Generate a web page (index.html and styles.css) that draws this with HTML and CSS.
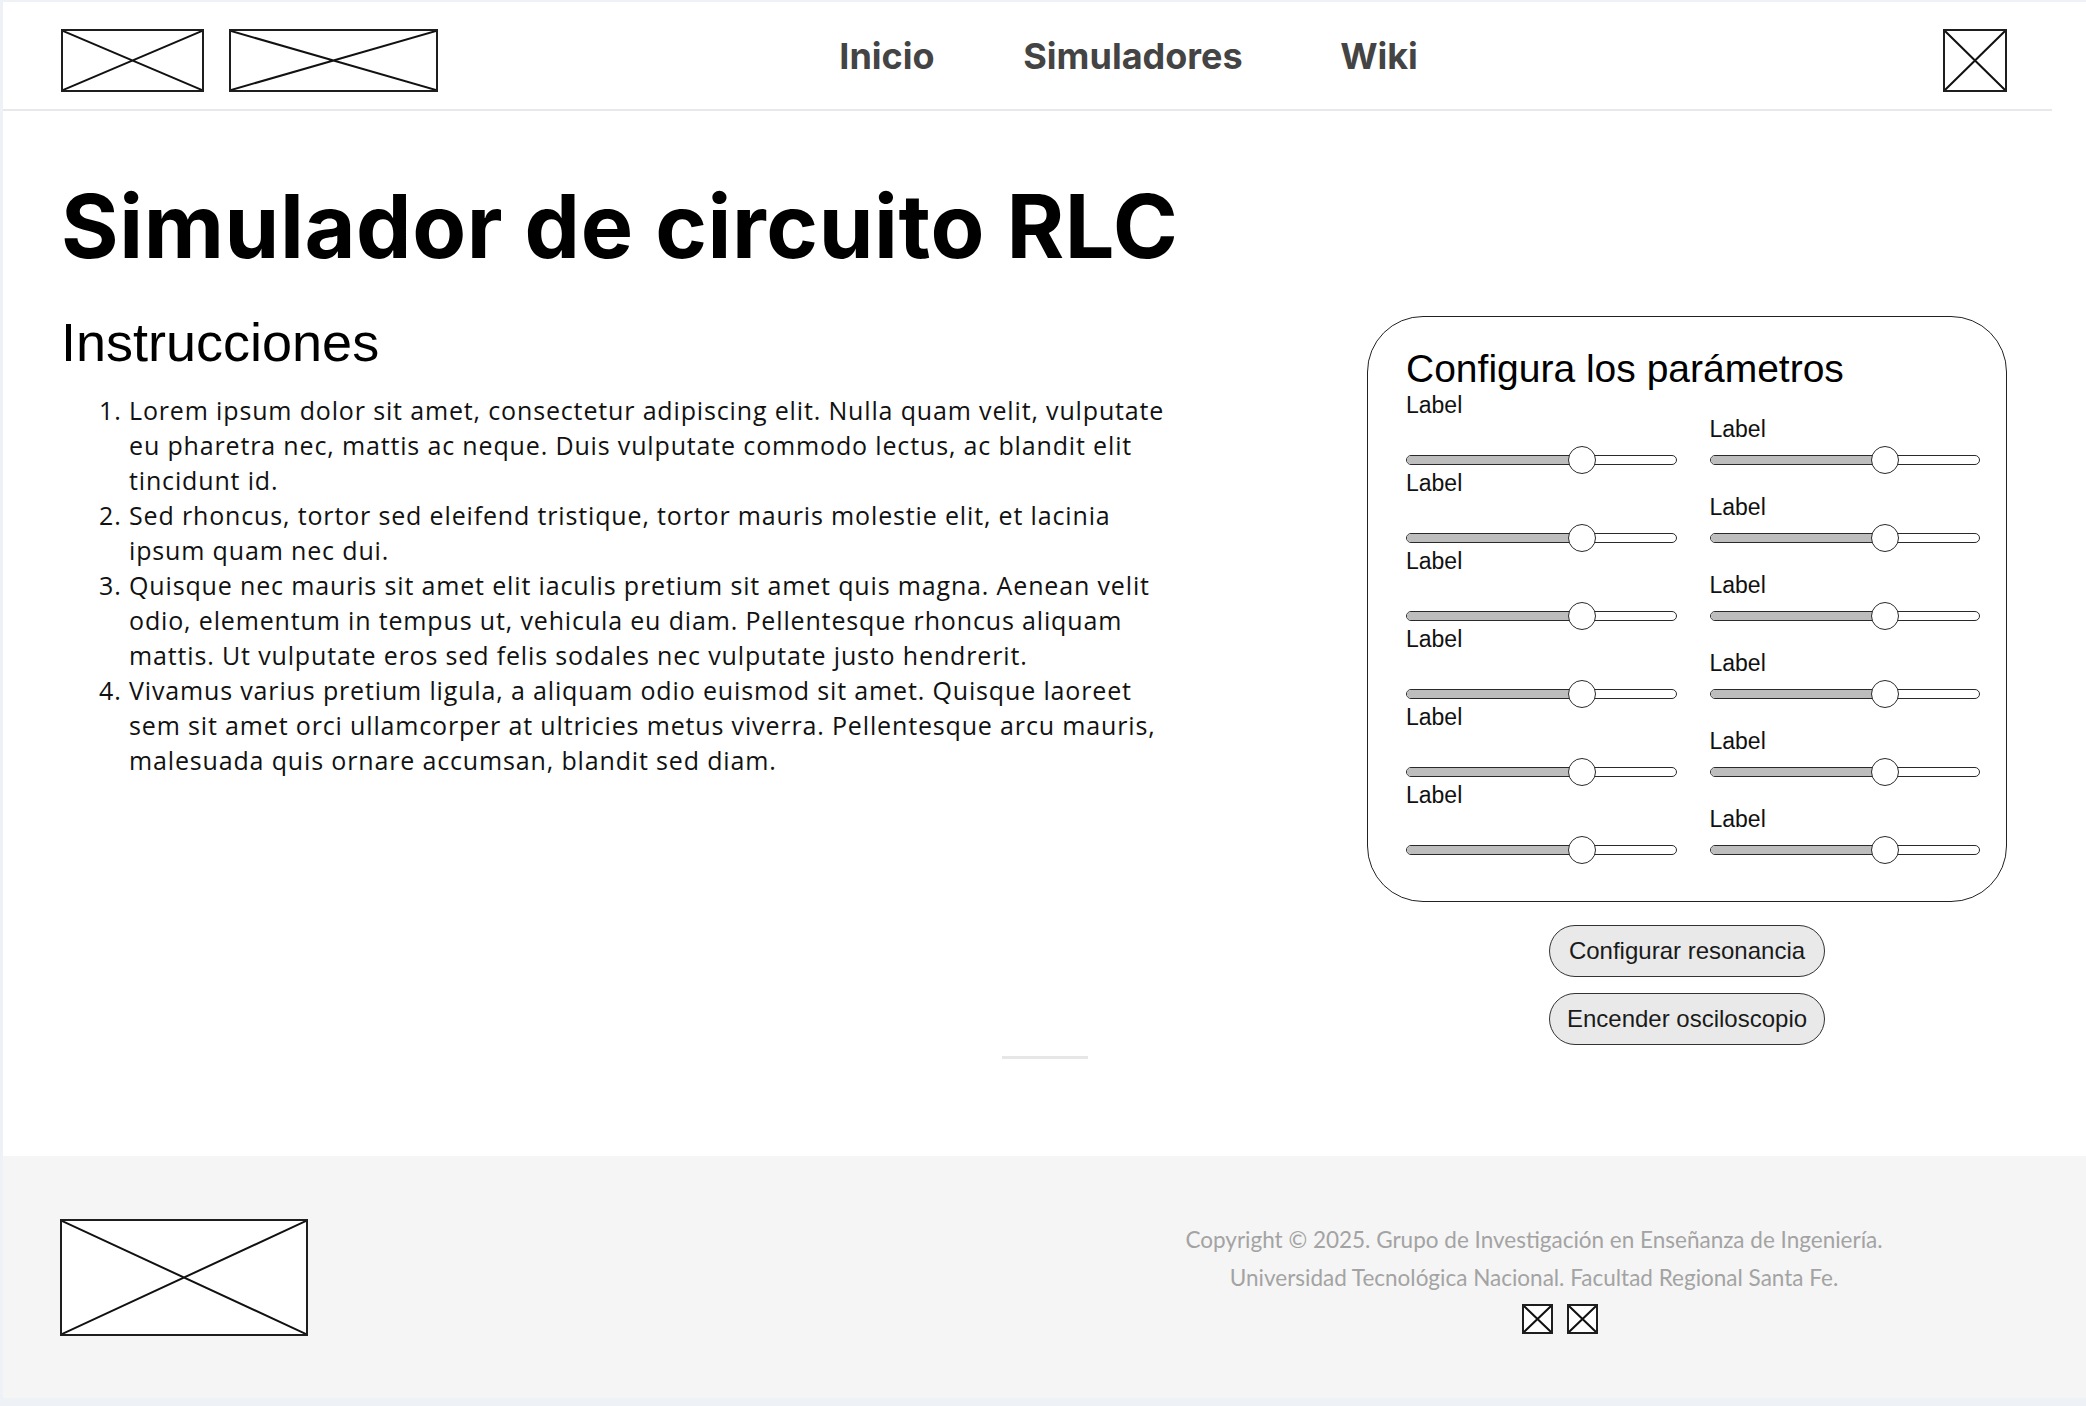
FILE: index.html
```html
<!DOCTYPE html>
<html lang="es">
<head>
<meta charset="utf-8">
<title>Simulador de circuito RLC</title>
<link rel="stylesheet" href="styles.css">
</head>
<body>
<div class="page">
  <header class="topbar">
    <div class="brand">
      <svg class="ph logo-a" viewBox="0 0 100 100" preserveAspectRatio="none"><path d="M0 0L100 100M100 0L0 100" vector-effect="non-scaling-stroke"/></svg>
      <svg class="ph logo-b" viewBox="0 0 100 100" preserveAspectRatio="none"><path d="M0 0L100 100M100 0L0 100" vector-effect="non-scaling-stroke"/></svg>
    </div>
    <nav class="nav">
      <a class="nav-link" href="#">Inicio</a>
      <a class="nav-link" href="#">Simuladores</a>
      <a class="nav-link" href="#">Wiki</a>
    </nav>
    <svg class="ph user" viewBox="0 0 100 100" preserveAspectRatio="none"><path d="M0 0L100 100M100 0L0 100" vector-effect="non-scaling-stroke"/></svg>
  </header>

  <main class="content">
    <h1 class="title">Simulador de circuito RLC</h1>
    <div class="columns">
      <section class="instructions">
        <h2 class="subtitle">Instrucciones</h2>
        <ol class="steps">
          <li>Lorem ipsum dolor sit amet, consectetur adipiscing elit. Nulla quam velit, vulputate<br>eu pharetra nec, mattis ac neque. Duis vulputate commodo lectus, ac blandit elit<br>tincidunt id.</li>
          <li>Sed rhoncus, tortor sed eleifend tristique, tortor mauris molestie elit, et lacinia<br>ipsum quam nec dui.</li>
          <li>Quisque nec mauris sit amet elit iaculis pretium sit amet quis magna. Aenean velit<br>odio, elementum in tempus ut, vehicula eu diam. Pellentesque rhoncus aliquam<br>mattis. Ut vulputate eros sed felis sodales nec vulputate justo hendrerit.</li>
          <li>Vivamus varius pretium ligula, a aliquam odio euismod sit amet. Quisque laoreet<br>sem sit amet orci ullamcorper at ultricies metus viverra. Pellentesque arcu mauris,<br>malesuada quis ornare accumsan, blandit sed diam.</li>
        </ol>
      </section>

      <aside class="controls">
        <div class="panel">
          <h3 class="panel-title">Configura los parámetros</h3>
          <div class="sliders">
            <div class="slider-col">
              <div class="field"><span class="label">Label</span><div class="track"><div class="fill" style="width:65%"></div><span class="thumb" style="left:65%"></span></div></div>
              <div class="field"><span class="label">Label</span><div class="track"><div class="fill" style="width:65%"></div><span class="thumb" style="left:65%"></span></div></div>
              <div class="field"><span class="label">Label</span><div class="track"><div class="fill" style="width:65%"></div><span class="thumb" style="left:65%"></span></div></div>
              <div class="field"><span class="label">Label</span><div class="track"><div class="fill" style="width:65%"></div><span class="thumb" style="left:65%"></span></div></div>
              <div class="field"><span class="label">Label</span><div class="track"><div class="fill" style="width:65%"></div><span class="thumb" style="left:65%"></span></div></div>
              <div class="field"><span class="label">Label</span><div class="track"><div class="fill" style="width:65%"></div><span class="thumb" style="left:65%"></span></div></div>
            </div>
            <div class="slider-col slider-col-right">
              <div class="field"><span class="label">Label</span><div class="track"><div class="fill" style="width:65%"></div><span class="thumb" style="left:65%"></span></div></div>
              <div class="field"><span class="label">Label</span><div class="track"><div class="fill" style="width:65%"></div><span class="thumb" style="left:65%"></span></div></div>
              <div class="field"><span class="label">Label</span><div class="track"><div class="fill" style="width:65%"></div><span class="thumb" style="left:65%"></span></div></div>
              <div class="field"><span class="label">Label</span><div class="track"><div class="fill" style="width:65%"></div><span class="thumb" style="left:65%"></span></div></div>
              <div class="field"><span class="label">Label</span><div class="track"><div class="fill" style="width:65%"></div><span class="thumb" style="left:65%"></span></div></div>
              <div class="field"><span class="label">Label</span><div class="track"><div class="fill" style="width:65%"></div><span class="thumb" style="left:65%"></span></div></div>
            </div>
          </div>
        </div>
        <div class="actions">
          <button class="btn" type="button">Configurar resonancia</button>
          <button class="btn" type="button">Encender osciloscopio</button>
        </div>
      </aside>
    </div>
    <div class="divider"></div>
  </main>

  <footer class="footer">
    <svg class="ph footer-logo" viewBox="0 0 100 100" preserveAspectRatio="none"><path d="M0 0L100 100M100 0L0 100" vector-effect="non-scaling-stroke"/></svg>
    <div class="footer-info">
      <p class="footer-line">Copyright © 2025. Grupo de Investigación en Enseñanza de Ingeniería.</p>
      <p class="footer-line">Universidad Tecnológica Nacional. Facultad Regional Santa Fe.</p>
      <div class="social">
        <svg class="ph social-icon" viewBox="0 0 100 100" preserveAspectRatio="none"><path d="M0 0L100 100M100 0L0 100" vector-effect="non-scaling-stroke"/></svg>
        <svg class="ph social-icon" viewBox="0 0 100 100" preserveAspectRatio="none"><path d="M0 0L100 100M100 0L0 100" vector-effect="non-scaling-stroke"/></svg>
      </div>
    </div>
  </footer>
</div>
</body>
</html>
```

FILE: styles.css
```css
* { box-sizing: border-box; }

html, body {
  margin: 0;
  padding: 0;
}

body {
  background: #eef1f5;
  width: 2086px;
  height: 1406px;
  overflow: hidden;
  font-family: "Liberation Sans", Arial, sans-serif;
  color: #111;
}

.page {
  margin: 2px 0 0 3px;
  height: 1396px;
  background: #fff;
  display: flex;
  flex-direction: column;
}

/* placeholders */
.ph {
  display: block;
  background: #fff;
  border: 2px solid #1e1e1e;
}
.ph path {
  stroke: #111;
  stroke-width: 2;
  fill: none;
}

/* header */
.topbar {
  height: 109px;
  margin-right: 34px;
  padding: 0 45px 0 58px;
  display: flex;
  align-items: center;
  border-bottom: 2px solid #e7e8eb;
  flex-shrink: 0;
}
.brand {
  display: flex;
  gap: 25px;
  margin-top: 10px;
}
.logo-a { width: 143px; height: 63px; }
.logo-b { width: 209px; height: 63px; }
.nav {
  display: flex;
  margin-left: 326px;
}
.nav-link {
  width: 246px;
  text-align: center;
  font-family: "Inter", "Liberation Sans", sans-serif;
  font-weight: 700;
  font-size: 36px;
  color: #444;
  text-decoration: none;
}
.user {
  width: 64px;
  height: 63px;
  margin-left: auto;
  margin-top: 10px;
}

/* main */
.content {
  flex: 1;
  padding: 64px 79px 0 58px;
  display: flex;
  flex-direction: column;
}
.title {
  margin: 0;
  font-family: "Inter", "Liberation Sans", sans-serif;
  font-weight: 700;
  font-size: 88px;
  line-height: 102px;
  letter-spacing: 0.6px;
  color: #000;
}
.columns {
  margin-top: 35px;
  display: flex;
  justify-content: space-between;
  align-items: flex-start;
}
.subtitle {
  margin: 0;
  font-weight: 400;
  font-size: 54px;
  line-height: 61px;
  color: #000;
}
.steps {
  margin: 20px 0 0;
  padding-left: 68px;
  font-family: "Open Sans", sans-serif;
  font-size: 25px;
  letter-spacing: 0.85px;
  line-height: 35px;
  color: #111;
  white-space: nowrap;
}

/* controls */
.controls {
  width: 640px;
  margin-top: 4px;
  display: flex;
  flex-direction: column;
  align-items: center;
}
.panel {
  width: 100%;
  border: 1.5px solid #222;
  border-radius: 56px;
  padding: 30px 26px 41px 38px;
}
.panel-title {
  margin: 0;
  font-weight: 400;
  font-size: 39px;
  line-height: 44px;
  color: #000;
}
.sliders {
  margin-top: 1px;
  display: flex;
  gap: 33px;
}
.slider-col {
  width: 271px;
  display: flex;
  flex-direction: column;
}
.field {
  height: 78px;
  display: flex;
  flex-direction: column;
  justify-content: space-between;
  padding-bottom: 5px;
}
.label {
  font-size: 23px;
  line-height: 27px;
  color: #111;
}
.slider-col-right .label {
  margin-top: 24px;
}
.track {
  position: relative;
  height: 10px;
  border: 1.5px solid #2a2a2a;
  border-radius: 6px;
  background: #fff;
}
.fill {
  height: 100%;
  background: #bdbdbd;
  border-radius: 5px 0 0 5px;
}
.thumb {
  position: absolute;
  top: 50%;
  width: 28px;
  height: 28px;
  margin: -14px 0 0 -14px;
  border: 1.5px solid #2a2a2a;
  border-radius: 50%;
  background: #fff;
}
.actions {
  margin-top: 23px;
  display: flex;
  flex-direction: column;
  gap: 16px;
}
.btn {
  width: 276px;
  height: 52px;
  border: 1.5px solid #333;
  border-radius: 26px;
  background: #e9e9e9;
  font-family: "Liberation Sans", Arial, sans-serif;
  font-size: 24px;
  color: #1a1a1a;
  padding: 0;
}
.divider {
  width: 86px;
  height: 3px;
  margin: 11px auto 0;
  position: relative;
  left: 11px;
  background: #e6e6e6;
}

/* footer */
.footer {
  height: 242px;
  flex-shrink: 0;
  background: #f5f5f5;
  display: flex;
  align-items: center;
  padding: 0 0 0 57px;
}
.footer-logo {
  width: 248px;
  height: 117px;
}
.footer-info {
  margin-left: auto;
  width: 900px;
  margin-right: 102px;
  text-align: center;
  font-family: "Lato", sans-serif;
  color: #a3a3a3;
}
.footer-line {
  margin: 0;
  font-size: 22.5px;
  line-height: 38px;
}
.social {
  margin-top: 7px;
  padding-left: 52px;
  display: flex;
  justify-content: center;
  gap: 14px;
}
.social-icon {
  width: 31px;
  height: 30px;
}
```
